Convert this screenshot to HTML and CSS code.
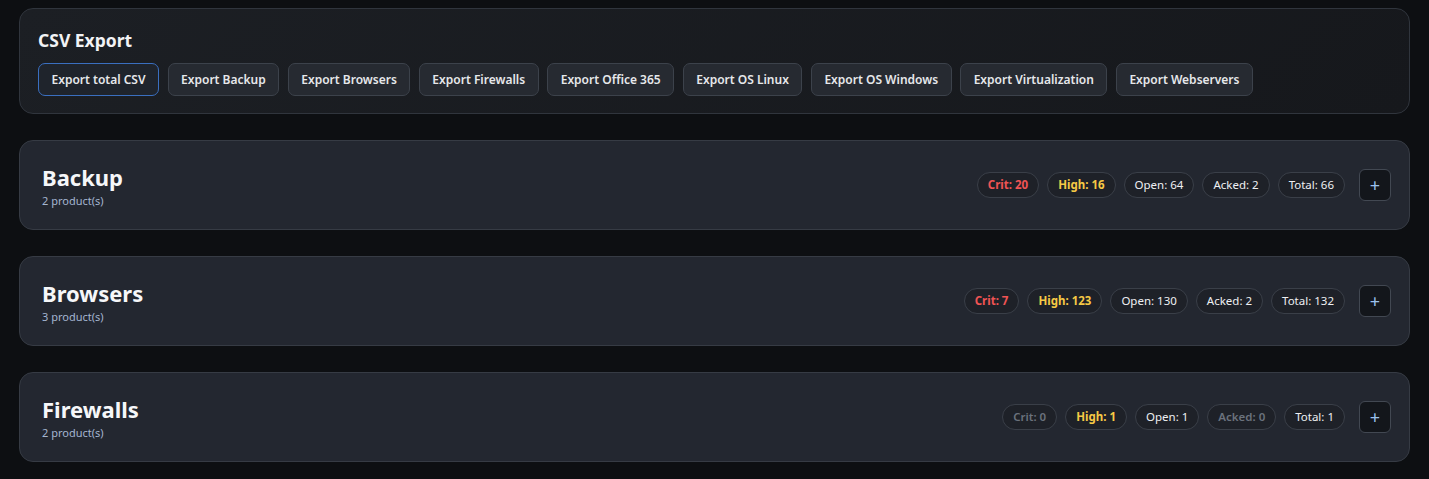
FILE: index.html
```html
<!DOCTYPE html>
<html lang="en">
<head>
    <meta charset="UTF-8">
    <meta name="viewport" content="width=device-width, initial-scale=1.0">
    <title>Vulnerability overview</title>
    <link rel="stylesheet" href="styles.css">
</head>
<body>
    <div class="export-card">
        <h2 class="export-title">CSV Export</h2>
        <div class="export-buttons">
            <button class="export-btn primary">Export total CSV</button>
            <button class="export-btn">Export Backup</button>
            <button class="export-btn">Export Browsers</button>
            <button class="export-btn">Export Firewalls</button>
            <button class="export-btn">Export Office 365</button>
            <button class="export-btn">Export OS Linux</button>
            <button class="export-btn">Export OS Windows</button>
            <button class="export-btn">Export Virtualization</button>
            <button class="export-btn">Export Webservers</button>
        </div>
    </div>

    <div class="category">
        <div class="category-info">
            <h3 class="category-name">Backup</h3>
            <div class="category-count">2 product(s)</div>
        </div>
        <div class="category-stats">
            <span class="pill crit">Crit: 20</span>
            <span class="pill high">High: 16</span>
            <span class="pill">Open: 64</span>
            <span class="pill">Acked: 2</span>
            <span class="pill">Total: 66</span>
            <button class="toggle">+</button>
        </div>
    </div>

    <div class="category">
        <div class="category-info">
            <h3 class="category-name">Browsers</h3>
            <div class="category-count">3 product(s)</div>
        </div>
        <div class="category-stats">
            <span class="pill crit">Crit: 7</span>
            <span class="pill high">High: 123</span>
            <span class="pill">Open: 130</span>
            <span class="pill">Acked: 2</span>
            <span class="pill">Total: 132</span>
            <button class="toggle">+</button>
        </div>
    </div>

    <div class="category">
        <div class="category-info">
            <h3 class="category-name">Firewalls</h3>
            <div class="category-count">2 product(s)</div>
        </div>
        <div class="category-stats">
            <span class="pill muted">Crit: 0</span>
            <span class="pill high">High: 1</span>
            <span class="pill">Open: 1</span>
            <span class="pill muted">Acked: 0</span>
            <span class="pill">Total: 1</span>
            <button class="toggle">+</button>
        </div>
    </div>
</body>
</html>
```

FILE: styles.css
```css
body {
    font-family: "Noto Sans", "Open Sans", sans-serif;
    margin: 0;
    padding: 8px 19px;
    background-color: #0d0f12;
    color: #e6e8eb;
    display: flex;
    flex-direction: column;
    gap: 26px;
}
.export-card {
    background: linear-gradient(135deg, #1c1f24, #16181c);
    border: 1px solid #30353d;
    border-radius: 14px;
    padding: 19px 18px 17px;
}
.export-title {
    font-size: 17.5px;
    font-weight: 700;
    margin: 0 0 11px;
    line-height: 24px;
    color: #f2f3f5;
}
.export-buttons {
    display: flex;
    gap: 8.5px;
    flex-wrap: wrap;
}
.export-btn {
    font-family: inherit;
    font-size: 12px;
    font-weight: 600;
    color: #e6e8eb;
    background: #262a31;
    border: 1px solid #3c424b;
    border-radius: 7px;
    height: 33px;
    padding: 0 12.5px;
}
.export-btn.primary {
    border-color: #3a6fc0;
    background: #1f242c;
}
.category {
    background: #232730;
    border: 1px solid #363b44;
    border-radius: 14px;
    padding: 0 18px 0 22px;
    height: 88px;
    display: flex;
    align-items: center;
    justify-content: space-between;
}
.category-info {
    padding-top: 2px;
}
.category-name {
    font-size: 22px;
    font-weight: 700;
    margin: 0;
    line-height: 26px;
    color: #f6f7f9;
}
.category-count {
    font-size: 11px;
    color: #a3b5d0;
    line-height: 15px;
    margin-top: 3px;
}
.category-stats {
    display: flex;
    align-items: center;
    gap: 8px;
}
.pill {
    font-size: 11.5px;
    color: #eef0f3;
    background: #1e2128;
    border: 1px solid #3a3f48;
    border-radius: 14px;
    height: 26px;
    line-height: 24px;
    padding: 0 10px;
    box-sizing: border-box;
}
.pill.crit {
    color: #f05454;
    font-weight: 700;
}
.pill.high {
    color: #f6c945;
    font-weight: 700;
}
.pill.muted {
    color: #6b727d;
    font-weight: 600;
}
.toggle {
    margin-left: 6px;
    width: 32px;
    height: 32px;
    background: #13161b;
    border: 1px solid #424852;
    border-radius: 6px;
    color: #9cc2ee;
    font-size: 18px;
    line-height: 1;
    font-family: inherit;
    padding: 0;
}
```
